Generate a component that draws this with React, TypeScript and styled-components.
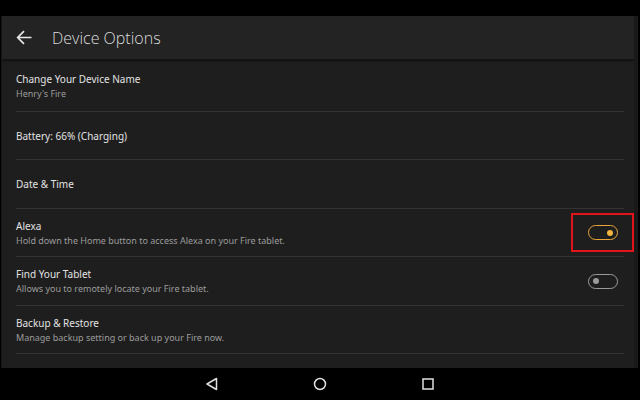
import React from "react";
import styled, { createGlobalStyle } from "styled-components";

const Global = createGlobalStyle`
  html, body { margin: 0; padding: 0; background: #000; }
  body { font-family: "Noto Sans", "Open Sans", Arial, sans-serif; }
`;

const Screen = styled.div`
  width: 640px;
  height: 400px;
  background: #000;
  display: flex;
  flex-direction: column;
  overflow: hidden;
`;

const StatusBar = styled.div`
  height: 16px;
  flex: none;
  background: #000;
`;

const Panel = styled.div`
  flex: 1;
  display: flex;
  flex-direction: column;
  margin: 0 2px 0 1px;
  background: #1e1e1e;
  border-left: 1px solid #151515;
  border-right: 4px solid #191919;
  overflow: hidden;
`;

const Header = styled.div`
  height: 43px;
  flex: none;
  display: flex;
  align-items: center;
  background: #232323;
  border-bottom: 1px solid #141414;
  box-shadow: 0 1px 2px rgba(0, 0, 0, 0.5);
  padding-left: 14px;
  gap: 20px;
`;

const Title = styled.div`
  font-family: "Open Sans", "Noto Sans", sans-serif;
  font-weight: 300;
  font-size: 16px;
  color: #dcdcdc;
`;

const List = styled.div`
  display: flex;
  flex-direction: column;
`;

const Row = styled.div<{ $h: number }>`
  height: ${(p) => p.$h}px;
  flex: none;
  margin: 0 10px 0 14px;
  border-bottom: 1px solid #333;
  display: flex;
  align-items: center;
  justify-content: space-between;
  box-sizing: border-box;
`;

const Texts = styled.div`
  display: flex;
  flex-direction: column;
  gap: 2px;
`;

const Label = styled.div`
  font-size: 10px;
  color: #e2e2e2;
  line-height: 14px;
`;

const Sub = styled.div`
  font-size: 9px;
  color: #9c9c9c;
  line-height: 12px;
`;

const Highlight = styled.div`
  border: 2px solid #e0141a;
  width: 63px;
  height: 39px;
  display: flex;
  align-items: center;
  justify-content: center;
  margin-right: -10px;
  box-sizing: border-box;
`;

const ToggleWrap = styled.div`
  margin-right: 6px;
  display: flex;
`;

const Toggle = styled.div<{ $on: boolean }>`
  width: 21px;
  height: 13px;
  border-radius: 8px;
  border: 1.5px solid ${(p) => (p.$on ? "#e9a43a" : "#9a9a9a")};
  display: flex;
  align-items: center;
  justify-content: ${(p) => (p.$on ? "flex-end" : "flex-start")};
  padding: 0 3.5px;
  box-sizing: content-box;
`;

const Dot = styled.div<{ $on: boolean }>`
  width: 6px;
  height: 6px;
  border-radius: 50%;
  background: ${(p) => (p.$on ? "#f1b43c" : "#9a9a9a")};
`;

const NavBar = styled.div`
  height: 32px;
  flex: none;
  background: #000;
  display: flex;
  align-items: center;
  justify-content: center;
  gap: 94px;
`;

const NavIcon = styled.svg`
  width: 14px;
  height: 14px;
  display: block;
`;

const rows = [
  { h: 52, label: "Change Your Device Name", sub: "Henry's Fire" },
  { h: 48, label: "Battery: 66% (Charging)" },
  { h: 49, label: "Date & Time" },
  { h: 48, label: "Alexa", sub: "Hold down the Home button to access Alexa on your Fire tablet.", toggle: "on" },
  { h: 49, label: "Find Your Tablet", sub: "Allows you to remotely locate your Fire tablet.", toggle: "off" },
  { h: 48, label: "Backup & Restore", sub: "Manage backup setting or back up your Fire now." },
];

export default function App() {
  return (
    <Screen>
      <Global />
      <StatusBar />
      <Panel>
        <Header>
          <svg width="16" height="15" viewBox="0 0 16 15">
            <path d="M15.5 7.5H2M8 1.2L1.7 7.5 8 13.8" stroke="#e6e6e6" strokeWidth="1.7" fill="none" />
          </svg>
          <Title>Device Options</Title>
        </Header>
        <List>
          {rows.map((r) => (
            <Row key={r.label} $h={r.h}>
              <Texts>
                <Label>{r.label}</Label>
                {r.sub && <Sub>{r.sub}</Sub>}
              </Texts>
              {r.toggle === "on" && (
                <Highlight>
                  <Toggle $on>
                    <Dot $on />
                  </Toggle>
                </Highlight>
              )}
              {r.toggle === "off" && (
                <ToggleWrap>
                  <Toggle $on={false}>
                    <Dot $on={false} />
                  </Toggle>
                </ToggleWrap>
              )}
            </Row>
          ))}
        </List>
      </Panel>
      <NavBar>
        <NavIcon viewBox="0 0 14 14">
          <path d="M11.5 1.5v11L2 7z" stroke="#e0e0e0" strokeWidth="1.5" fill="none" strokeLinejoin="round" />
        </NavIcon>
        <NavIcon viewBox="0 0 14 14">
          <circle cx="7" cy="7" r="5.5" stroke="#e0e0e0" strokeWidth="1.5" fill="none" />
        </NavIcon>
        <NavIcon viewBox="0 0 14 14">
          <rect x="2" y="2" width="10" height="10" stroke="#e0e0e0" strokeWidth="1.5" fill="none" />
        </NavIcon>
      </NavBar>
    </Screen>
  );
}
